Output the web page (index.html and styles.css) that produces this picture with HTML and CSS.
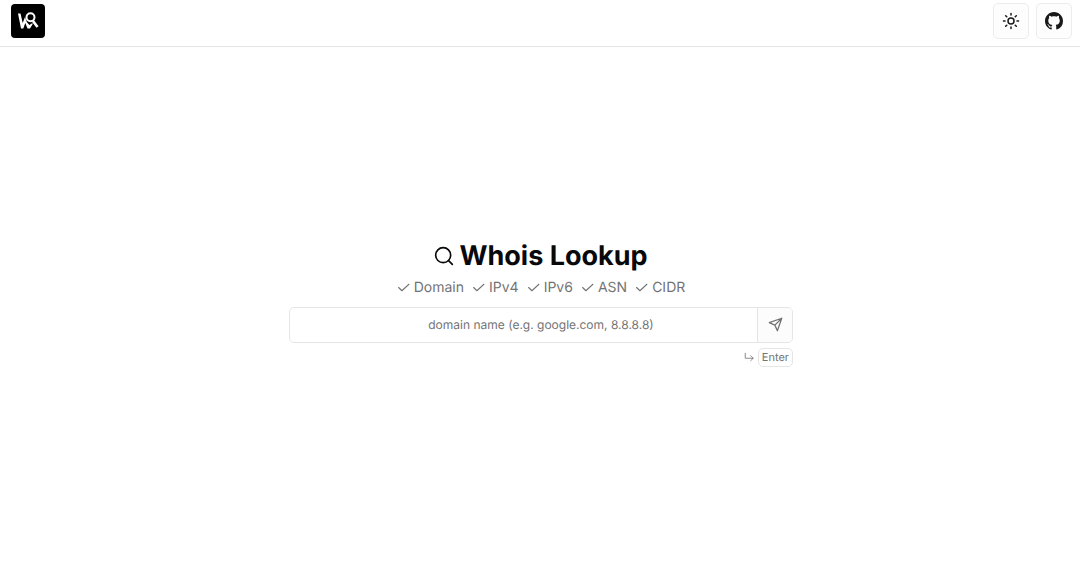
FILE: index.html
```html
<!DOCTYPE html>
<html lang="en">

<head>
    <meta charset="UTF-8">
    <meta name="viewport" content="width=device-width, initial-scale=1.0">
    <title>Whois Lookup</title>
    <link rel="stylesheet" href="styles.css">
</head>

<body>
<header class="navbar">
    <a class="logo" href="/" aria-label="Home">
        <svg viewBox="0 0 34 34">
            <path d="M7 9.500h2.500l2.200 9.500 2.300-6 1.800 5 1.200 1.500 1.500 1.500 2-1.500h1.500L19 24.500h-2.500L14.300 19l-2 5.500H10z" fill="currentColor" stroke="none"/>
            <circle cx="19.500" cy="13.300" r="4" stroke-width="2"/>
            <path d="M22 17l4.500 6" stroke-width="2.600"/>
        </svg>
    </a>
    <div class="nav-actions">
        <button type="button" class="icon-btn" aria-label="Toggle theme">
            <svg class="icon-sun" viewBox="0 0 24 24">
                <circle cx="12" cy="12" r="4"/>
                <path d="M12 2v2M12 20v2M4.930 4.930l1.410 1.410M17.660 17.660l1.410 1.410M2 12h2M20 12h2M6.340 17.660l-1.410 1.410M19.070 4.930l-1.410 1.410"/>
            </svg>
        </button>
        <a class="icon-btn" href="https://github.com" aria-label="GitHub">
            <svg class="icon-github" viewBox="0 0 16 16">
                <path d="M8 0C3.580 0 0 3.580 0 8c0 3.540 2.290 6.530 5.470 7.590.4.070.55-.17.55-.38 0-.19-.01-.82-.01-1.490-2.010.37-2.530-.49-2.690-.94-.09-.23-.48-.94-.82-1.130-.28-.15-.68-.52-.01-.53.63-.01 1.080.58 1.230.82.72 1.210 1.870.87 2.330.66.07-.52.28-.87.51-1.070-1.780-.2-3.640-.89-3.640-3.950 0-.87.31-1.590.82-2.150-.08-.2-.36-1.020.08-2.120 0 0 .67-.21 2.200.82.64-.18 1.320-.27 2-.27s1.360.09 2 .27c1.530-1.040 2.200-.82 2.200-.82.44 1.100.16 1.920.08 2.120.51.56.82 1.270.82 2.150 0 3.070-1.870 3.750-3.650 3.950.29.25.54.73.54 1.480 0 1.070-.01 1.930-.01 2.200 0 .21.15.46.55.38A8.010 8.010 0 0 0 16 8c0-4.420-3.580-8-8-8z"/>
            </svg>
        </a>
    </div>
</header>

<main class="main">
    <div class="lookup">
        <h1 class="title">
            <svg class="icon-search" viewBox="0 0 24 24">
                <circle cx="11" cy="11" r="9"/>
                <path d="M22 22l-4.500-4.500"/>
            </svg>
            Whois Lookup
        </h1>

        <ul class="types">
            <li><svg viewBox="0 0 24 24"><path d="M22 6L9 18l-6-6"/></svg>Domain</li>
            <li><svg viewBox="0 0 24 24"><path d="M22 6L9 18l-6-6"/></svg>IPv4</li>
            <li><svg viewBox="0 0 24 24"><path d="M22 6L9 18l-6-6"/></svg>IPv6</li>
            <li><svg viewBox="0 0 24 24"><path d="M22 6L9 18l-6-6"/></svg>ASN</li>
            <li><svg viewBox="0 0 24 24"><path d="M22 6L9 18l-6-6"/></svg>CIDR</li>
        </ul>

        <form class="search-form">
            <input type="text" class="search-input" name="query" aria-label="Domain name" placeholder="domain name (e.g. google.com, 8.8.8.8)">
            <button type="submit" class="search-btn" aria-label="Search">
                <svg viewBox="0 0 24 24">
                    <path d="M22 2L15 22l-4-9-9-4zM22 2L11 13"/>
                </svg>
            </button>
        </form>

        <div class="hint">
            <svg viewBox="0 0 24 24">
                <path d="M16 9l6 6-6 6M3 3v12h19"/>
            </svg>
            <kbd>Enter</kbd>
        </div>
    </div>
</main>
</body>

</html>
```
FILE: styles.css
```css
* {
    box-sizing: border-box;
}

body {
    font-family: Inter, "Liberation Sans", sans-serif;
    text-rendering: geometricPrecision;
    background-color: #fff;
    color: #09090b;
    margin: 0;
    min-height: 100vh;
    display: flex;
    flex-direction: column;
}

svg {
    display: block;
    flex-shrink: 0;
    fill: none;
    stroke: currentColor;
    stroke-width: 2;
    stroke-linecap: round;
    stroke-linejoin: round;
}

/* Top bar */
.navbar {
    display: flex;
    justify-content: space-between;
    align-items: center;
    padding: 3px 8px 7px 11px;
    border-bottom: 1px solid #e5e5e5;
}

.logo {
    width: 34px;
    height: 34px;
    border-radius: 4px;
    background-color: #000;
    color: #fff;
}

.logo svg {
    width: 100%;
    height: 100%;
    stroke-linecap: butt;
    stroke-linejoin: miter;
}

.nav-actions {
    display: flex;
    gap: 7px;
}

.icon-btn {
    display: flex;
    justify-content: center;
    align-items: center;
    width: 36px;
    height: 36px;
    padding: 0;
    border: 1px solid #ececec;
    border-radius: 5px;
    background-color: #fdfdfd;
    color: #18181b;
    cursor: pointer;
}

.icon-sun {
    width: 18px;
    height: 18px;
}

.icon-github {
    width: 18px;
    height: 18px;
    fill: currentColor;
    stroke: none;
}

/* Lookup form */
.main {
    flex: 1;
    display: flex;
    justify-content: center;
    align-items: center;
    padding: 0 14px 5px 16px;
}

.lookup {
    width: 100%;
    max-width: 504px;
}

.title {
    display: flex;
    justify-content: center;
    align-items: center;
    gap: 5px;
    margin: 0;
    font-size: 27px;
    line-height: 32px;
    font-weight: 700;
}

.icon-search {
    width: 20px;
    height: 20px;
}

.types {
    display: flex;
    justify-content: center;
    gap: 8px;
    margin: 4px 0 7px;
    padding: 0;
    list-style: none;
    font-size: 14px;
    line-height: 24px;
    color: #737373;
}

.types li {
    display: flex;
    align-items: center;
    gap: 4px;
}

.types svg {
    width: 13px;
    height: 13px;
}

.search-form {
    display: flex;
    height: 36px;
    border: 1px solid #e5e5e5;
    border-radius: 5px;
    overflow: hidden;
}

.search-input {
    flex: 1;
    min-width: 0;
    padding: 0 0 0 35px;
    border: none;
    outline: none;
    background-color: transparent;
    font-family: inherit;
    font-size: 12px;
    text-align: center;
    text-rendering: inherit;
    color: #09090b;
}

.search-input::placeholder {
    color: #737373;
}

.search-btn {
    display: flex;
    justify-content: center;
    align-items: center;
    width: 35px;
    padding: 0;
    border: none;
    border-left: 1px solid #e5e5e5;
    background-color: #fcfcfc;
    color: #737373;
    cursor: pointer;
}

.search-btn svg {
    width: 15px;
    height: 15px;
}

.hint {
    display: flex;
    justify-content: flex-end;
    align-items: center;
    gap: 4px;
    margin-top: 5px;
    color: #737373;
}

.hint svg {
    width: 10px;
    height: 10px;
}

.hint kbd {
    padding: 0 3px;
    border: 1px solid #e5e5e5;
    border-radius: 5px;
    font-family: inherit;
    font-size: 11px;
    line-height: 17px;
}
```
